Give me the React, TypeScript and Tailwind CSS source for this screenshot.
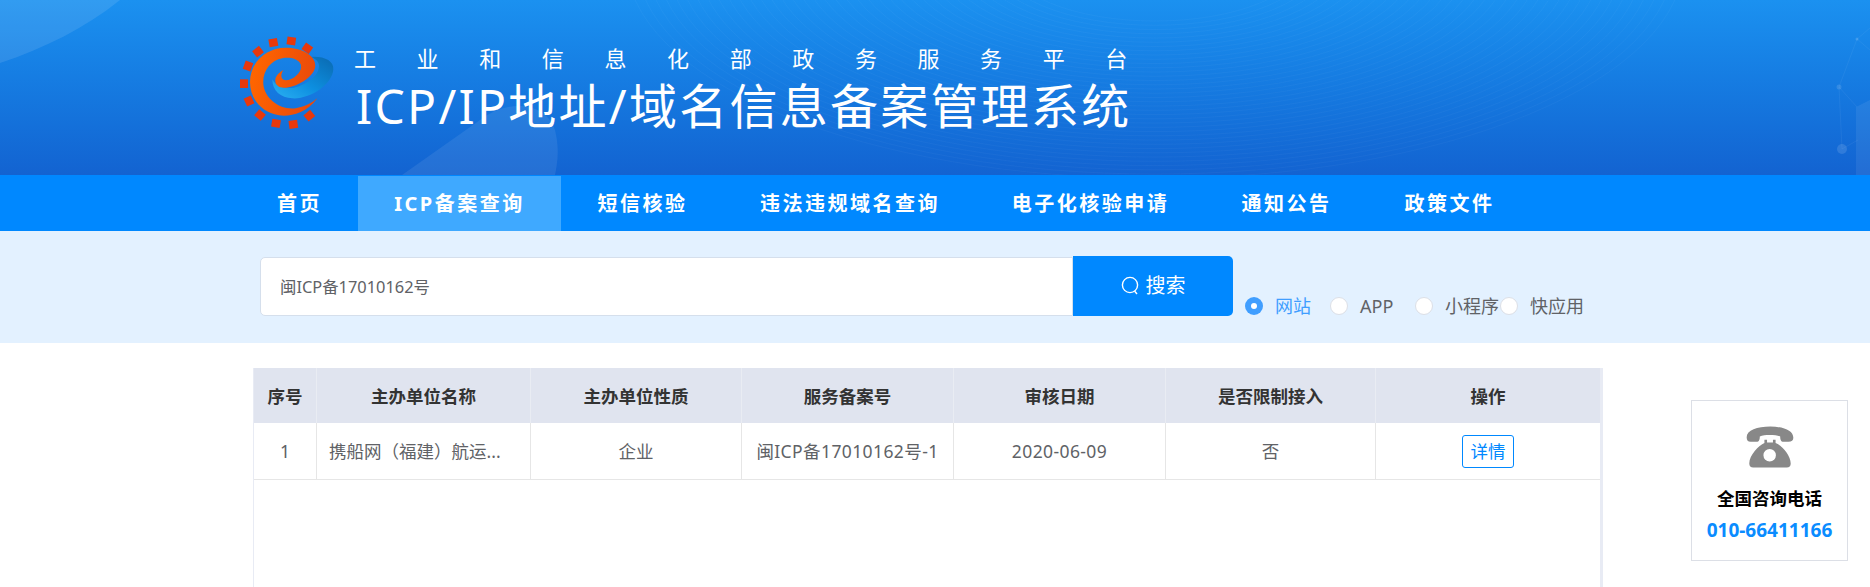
const cjk = "font-['Noto_Sans','Noto_Sans_CJK_SC',sans-serif]"

const navItems = [
  { label: "首页", width: "w-[117px]" },
  { label: "ICP备案查询", width: "w-[203px]", active: true },
  { label: "短信核验", width: "w-[163px]" },
  { label: "违法违规域名查询", width: "w-[252px]" },
  { label: "电子化核验申请", width: "w-[229px]" },
  { label: "通知公告", width: "w-[163px]" },
  { label: "政策文件", width: "w-[163px]" },
]

const radios = [
  { label: "网站", checked: true },
  { label: "APP" },
  { label: "小程序" },
  { label: "快应用" },
]

const columns = [
  { title: "序号", value: "1", width: "w-[63px]" },
  { title: "主办单位名称", value: "携船网（福建）航运...", width: "w-[214px]", left: true },
  { title: "主办单位性质", value: "企业", width: "w-[211px]" },
  { title: "服务备案号", value: "闽ICP备17010162号-1", width: "w-[212px]", wide: true },
  { title: "审核日期", value: "2020-06-09", width: "w-[212px]", wide: true },
  { title: "是否限制接入", value: "否", width: "w-[210px]" },
]

function HeaderBackdrop() {
  const rings = Array.from({ length: 38 }, (_, i) => 0.28 + i * 0.0195)
  return (
    <svg className="absolute inset-0 h-full w-full" viewBox="0 0 1870 175" preserveAspectRatio="none">
      <path d="M0 0H120C85 28 45 48 0 63Z" fill="#ffffff" opacity="0.1" />
      <path d="M402 175L480 120C505 100 545 100 555 130C560 150 557 165 555 175Z" fill="#ffffff" opacity="0.08" />
      {rings.map((k) => (
        <ellipse key={k} cx="1155" cy="-40" rx={528 * k} ry={218 * k} fill="none" stroke="#ffffff" strokeWidth="0.8" opacity="0.045" />
      ))}
      {/* network corner */}
      <path d="M1857 39L1839 87L1842 149M1839 87L1857 107M1857 39L1870 28M1857 39L1870 50M1842 149L1858 140" fill="none" stroke="#ffffff" strokeWidth="0.7" opacity="0.08" />
      <circle cx="1857" cy="39" r="1.5" fill="#ffffff" opacity="0.16" />
      <circle cx="1839" cy="87" r="2.5" fill="#ffffff" opacity="0.12" />
      <circle cx="1842" cy="149" r="5" fill="#ffffff" opacity="0.12" />
      <path d="M1856 107L1870 100V175H1856Z" fill="#ffffff" opacity="0.07" />
    </svg>
  )
}

function Logo() {
  const teeth = [
    [158, 65, -10], [212, 60, 8], [260, 82, 35], [112, 92, -38], [82, 135, -70], [70, 188, -90],
    [85, 240, -115], [118, 282, -140], [166, 307, -170], [218, 310, 172], [266, 284, 140],
  ]
  return (
    <svg width="97" height="97" viewBox="55 42 291 291" className="shrink-0">
      <defs>
        <linearGradient id="swoosh" x1="1" y1="0" x2="0" y2="1">
          <stop offset="0" stopColor="#0a69b0" />
          <stop offset="0.55" stopColor="#0d8fe0" />
          <stop offset="1" stopColor="#2bb0f2" />
        </linearGradient>
        <linearGradient id="spiral" x1="0" y1="0.4" x2="1" y2="0.6">
          <stop offset="0" stopColor="#ff6600" />
          <stop offset="1" stopColor="#e8480c" />
        </linearGradient>
      </defs>
      {teeth.map(([x, y, a]) => (
        <rect key={`${x}-${y}`} x={x - 13} y={y - 12} width="26" height="24" fill="#e8380c" transform={`rotate(${a} ${x} ${y})`} />
      ))}
      <path d="M270 108C310 105 340 120 338 145C335 190 270 235 215 232C180 230 155 210 155 175C165 195 190 205 220 200C255 192 295 165 295 135C295 122 285 113 270 108Z" fill="url(#swoosh)" />
      <path d="M290 232C255 280 205 287 175 283C120 275 88 230 88 183C88 125 135 80 195 80C245 80 290 105 283 140C277 170 225 200 190 200C172 200 160 190 165 170C170 160 178 152 188 147C180 160 178 175 195 178C220 178 248 150 240 130C232 112 205 108 185 112C150 118 125 150 128 190C132 235 180 268 225 262C250 258 275 245 290 232Z" fill="url(#spiral)" />
    </svg>
  )
}

function PhoneIcon() {
  return (
    <svg width="48" height="42" viewBox="256 137 146 126" className="mx-auto block">
      <path d="M258 170C258 150 290 138 330 138C370 138 400 150 400 172C400 180 395 184 385 184H370C362 184 360 178 360 168C345 162 312 162 298 168C298 178 296 184 288 184H270C262 184 258 180 258 170Z" fill="#888888" />
      <path
        fillRule="evenodd"
        d="M312 178H320V186H338V178H346V188C365 195 392 225 392 250C392 258 388 262 380 262H278C270 262 266 258 266 250C266 225 295 195 312 188ZM328 206A19 19 0 1 0 328 244A19 19 0 1 0 328 206Z"
        fill="#888888"
      />
    </svg>
  )
}

function SearchIcon() {
  return (
    <svg width="18" height="20" viewBox="0 0 18 20" fill="none" stroke="#ffffff" strokeWidth="1.4" className="shrink-0">
      <circle cx="9" cy="9" r="7.6" />
      <path d="M13.5 15L16 18" />
    </svg>
  )
}

export default function App() {
  return (
    <div className={`relative h-[587px] overflow-hidden bg-white ${cjk}`}>
      {/* Banner */}
      <header className="relative flex h-[175px] items-start bg-gradient-to-b from-[#1b91f0] to-[#1363d1] pl-[239px] pt-[35px]">
        <HeaderBackdrop />
        <div className="relative flex">
          <Logo />
          <div className="ml-[20px] text-white">
            <div className="-ml-[2px] mt-[9px] flex h-[28px] w-[800px] gap-[40.6px] text-[22px] leading-[28px]">
              {"工业和信息化部政务服务平台".split("").map((c, i) => (
                <span key={i}>{c}</span>
              ))}
            </div>
            <h1 className="mt-[4px] whitespace-nowrap text-[48px] font-normal leading-[60px] tracking-[2.25px]">ICP/IP地址/域名信息备案管理系统</h1>
          </div>
        </div>
      </header>

      {/* Nav */}
      <nav className="flex h-[56px] items-end bg-[#0088ff] pl-[241px]">
        {navItems.map((item) => (
          <a
            key={item.label}
            className={`flex h-[55px] items-center justify-center pt-[1px] text-[20px] font-bold tracking-[2.5px] text-white ${item.width} ${item.active ? "bg-[#3fa9ff]" : ""}`}
          >
            {item.label}
          </a>
        ))}
      </nav>

      {/* Search */}
      <section className="flex h-[112px] items-start bg-[#e3f1ff] pl-[260px] pt-[25px]">
        <div className="flex h-[60px] w-[973px] items-center">
          <div className="flex h-[59px] w-[813px] items-center self-end rounded-l-[5px] border border-[#d5dfec] bg-white pl-[19px] pt-[1px] text-[16.4px] text-[#606266]">
            闽ICP备17010162号
          </div>
          <button className="flex h-[60px] w-[160px] items-center justify-center gap-[7px] rounded-r-[5px] bg-[#0088ff] text-[20px] text-white">
            <SearchIcon />
            搜索
          </button>
        </div>
        <div className="ml-[12px] mt-[38px] flex">
          {radios.map((r) => (
            <label key={r.label} className={`flex w-[85px] items-center whitespace-nowrap text-[18px] leading-[24px] ${r.checked ? "text-[#409eff]" : "text-[#606266]"}`}>
              {r.checked ? (
                <span className="mr-[12px] flex h-[18px] w-[18px] shrink-0 items-center justify-center rounded-full bg-[#409eff]">
                  <span className="h-[6px] w-[6px] rounded-full bg-white" />
                </span>
              ) : (
                <span className="mr-[12px] h-[18px] w-[18px] shrink-0 rounded-full border border-[#dcdfe6] bg-white" />
              )}
              {r.label}
            </label>
          ))}
        </div>
      </section>

      {/* Results */}
      <main className="ml-[253px] mt-[25px] h-[219px] w-[1350px] border-l border-r-[3px] border-[#e8ebf4] text-[17.5px]">
        <div className="flex h-[55px] bg-[#e0e4ef] font-bold text-[#333333]">
          {columns.map((c) => (
            <div key={c.title} className={`flex items-center justify-center border-r border-[#e9ecf3] pt-[2px] ${c.width}`}>
              {c.title}
            </div>
          ))}
          <div className="flex flex-1 items-center justify-center pt-[2px]">操作</div>
        </div>
        <div className="flex h-[57px] border-b border-[#e6e6e6] text-[#606266]">
          {columns.map((c) => (
            <div key={c.title} className={`flex items-center border-r border-[#e6e6e6] ${c.width} ${c.left ? "pl-[12px]" : "justify-center"} ${c.wide ? "tracking-[0.4px]" : ""}`}>
              {c.value}
            </div>
          ))}
          <div className="flex flex-1 items-center justify-center">
            <button className="h-[33px] w-[52px] rounded-[3px] border border-[#0088ff] text-[17.5px] leading-[30px] text-[#0088ff]">详情</button>
          </div>
        </div>
      </main>

      {/* Hotline */}
      <aside className="absolute left-[1691px] top-[400px] h-[161px] w-[157px] border border-[#dcdfe6] bg-white pt-[25px] text-center">
        <PhoneIcon />
        <div className="mt-[18px] text-[17.5px] font-bold leading-[24px] text-black">全国咨询电话</div>
        <div className="mt-[8px] text-[19px] font-bold leading-[24px] text-[#0a8cff]">010-66411166</div>
      </aside>
    </div>
  )
}
